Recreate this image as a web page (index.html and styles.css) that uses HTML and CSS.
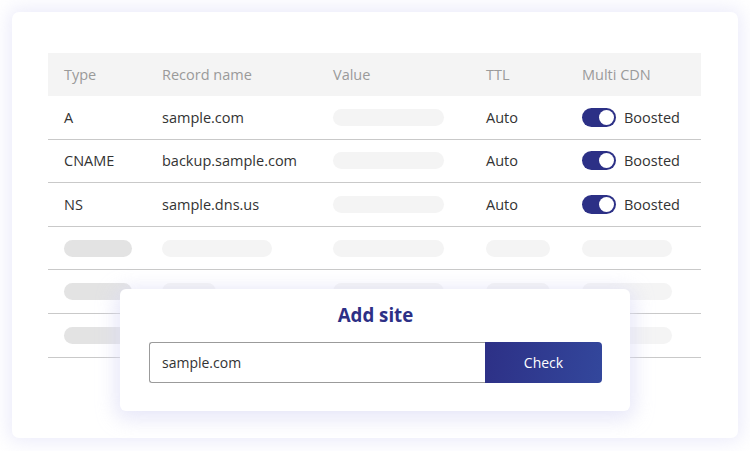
FILE: index.html
```html
<!DOCTYPE html>
<html>
<head>
<meta charset="utf-8">
<link rel="stylesheet" href="styles.css">
</head>
<body>
<div class="card">
  <div class="table">
    <div class="row head">
      <div>Type</div><div>Record name</div><div>Value</div><div>TTL</div><div>Multi CDN</div>
    </div>
    <div class="row">
      <div>A</div><div>sample.com</div><div><span class="pill value"></span></div><div>Auto</div>
      <div class="cdn"><span class="toggle"><span class="knob"></span></span>Boosted</div>
    </div>
    <div class="row">
      <div>CNAME</div><div>backup.sample.com</div><div><span class="pill value"></span></div><div>Auto</div>
      <div class="cdn"><span class="toggle"><span class="knob"></span></span>Boosted</div>
    </div>
    <div class="row">
      <div>NS</div><div>sample.dns.us</div><div><span class="pill value"></span></div><div>Auto</div>
      <div class="cdn"><span class="toggle"><span class="knob"></span></span>Boosted</div>
    </div>
    <div class="row">
      <div><span class="pill dark type"></span></div><div><span class="pill rec-long"></span></div><div><span class="pill value"></span></div><div><span class="pill ttl"></span></div><div><span class="pill cdnp"></span></div>
    </div>
    <div class="row">
      <div><span class="pill dark type"></span></div><div><span class="pill rec-short"></span></div><div><span class="pill value"></span></div><div><span class="pill ttl"></span></div><div><span class="pill cdnp"></span></div>
    </div>
    <div class="row">
      <div><span class="pill dark type"></span></div><div><span class="pill rec-long"></span></div><div><span class="pill value"></span></div><div><span class="pill ttl"></span></div><div><span class="pill cdnp"></span></div>
    </div>
  </div>
  <div class="modal">
    <h2 class="title">Add site</h2>
    <div class="form">
      <div class="input">sample.com</div>
      <div class="btn">Check</div>
    </div>
  </div>
</div>
</body>
</html>
```
FILE: styles.css
```css
* { box-sizing: border-box; }
html, body { margin: 0; padding: 0; background: #fff; }
body {
  font-family: "Open Sans", "Noto Sans", sans-serif;
  width: 750px;
  height: 451px;
  overflow: hidden;
  padding: 12px;
}
.card {
  position: relative;
  width: 726px;
  height: 426px;
  background: #fff;
  border-radius: 7px;
  box-shadow: 0 0 18px 4px rgba(226, 226, 248, 0.65);
  padding: 41px 36px 0 36px;
}
.table { width: 653px; }
.row {
  display: grid;
  grid-template-columns: 98px 171px 153px 96px 1fr;
  align-items: center;
  height: 43.6px;
  padding-left: 16px;
  border-bottom: 1px solid #c9c9c9;
  font-size: 14.5px;
  color: #333;
}
.row.head {
  height: 43px;
  background: #f4f4f4;
  border-bottom: none;
  color: #9a9a9a;
}
.row > div { display: flex; align-items: center; }
.pill {
  display: block;
  height: 17px;
  border-radius: 9px;
  background: #f4f4f4;
}
.pill.dark { background: #e3e3e3; }
.pill.type { width: 68px; }
.pill.value { width: 111px; }
.pill.rec-long { width: 110px; }
.pill.rec-short { width: 54px; }
.pill.ttl { width: 64px; }
.pill.cdnp { width: 90px; }
.cdn { gap: 8px; }
.toggle {
  display: flex;
  align-items: center;
  justify-content: flex-end;
  width: 34px;
  height: 19px;
  border-radius: 10px;
  background: #2c3086;
  padding: 2px;
}
.knob {
  width: 15px;
  height: 15px;
  border-radius: 50%;
  background: #fff;
}
.modal {
  position: absolute;
  left: 108px;
  top: 277px;
  width: 510px;
  height: 122px;
  background: #fff;
  border-radius: 6px;
  box-shadow: 0 4px 20px 4px rgba(220, 220, 245, 0.7);
  padding: 14px 28px 0 29px;
}
.title {
  margin: 0;
  text-align: center;
  font-size: 18.7px;
  font-weight: 700;
  line-height: 24px;
  color: #2d3086;
}
.form {
  display: flex;
  margin-top: 15px;
  height: 41px;
}
.input {
  width: 336px;
  height: 41px;
  border: 1px solid #9b9b9b;
  border-right: none;
  border-radius: 3px 0 0 3px;
  padding-left: 12px;
  display: flex;
  align-items: center;
  font-size: 14px;
  color: #333;
}
.btn {
  flex: 1;
  height: 41px;
  border-radius: 0 4px 4px 0;
  background: linear-gradient(100deg, #2d3086 0%, #33479c 100%);
  color: #fff;
  font-size: 14px;
  display: flex;
  align-items: center;
  justify-content: center;
}
```
